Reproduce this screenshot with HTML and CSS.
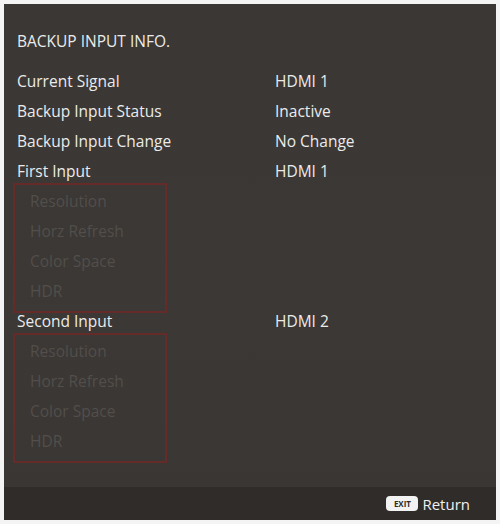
FILE: index.html
```html
<!DOCTYPE html>
<html>
<head>
<meta charset="utf-8">
<link rel="stylesheet" href="styles.css">
</head>
<body>
<div class="screen">
  <div class="content">
    <div class="title">BACKUP INPUT INFO.</div>
    <div class="row"><span class="label">Current Signal</span><span class="value">HDMI 1</span></div>
    <div class="row"><span class="label">Backup Input Status</span><span class="value">Inactive</span></div>
    <div class="row"><span class="label">Backup Input Change</span><span class="value">No Change</span></div>
    <div class="row"><span class="label">First Input</span><span class="value">HDMI 1</span></div>
    <div class="group">
      <div class="row dim"><span class="label">Resolution</span></div>
      <div class="row dim"><span class="label">Horz Refresh</span></div>
      <div class="row dim"><span class="label">Color Space</span></div>
      <div class="row dim"><span class="label">HDR</span></div>
    </div>
    <div class="row"><span class="label">Second Input</span><span class="value">HDMI 2</span></div>
    <div class="group">
      <div class="row dim"><span class="label">Resolution</span></div>
      <div class="row dim"><span class="label">Horz Refresh</span></div>
      <div class="row dim"><span class="label">Color Space</span></div>
      <div class="row dim"><span class="label">HDR</span></div>
    </div>
  </div>
  <div class="footer">
    <span class="key">EXIT</span><span class="ret">Return</span>
  </div>
</div>
</body>
</html>
```
FILE: styles.css
```css
html, body {
  margin: 0;
  padding: 0;
  background: #f4f4f4;
}
body {
  width: 500px;
  height: 524px;
  overflow: hidden;
}
.screen {
  margin: 4px 4px 0 4px;
  width: 492px;
  height: 516px;
  background: linear-gradient(#3a3734, #3b3835 60%, #393633);
  display: flex;
  flex-direction: column;
  font-family: "Open Sans", "Noto Sans", sans-serif;
  color: #ebebeb;
}
.content {
  flex: 1;
  padding: 27px 0 0 13px;
}
.title {
  font-size: 15.5px;
  line-height: 20px;
  height: 20px;
  margin-bottom: 15px;
}
.row {
  display: flex;
  height: 30px;
  line-height: 30px;
  font-size: 15.5px;
  white-space: nowrap;
}
.label {
  width: 258px;
}
.value {
  flex: 1;
}
.group {
  position: relative;
  width: 146px;
}
.group::after {
  content: "";
  position: absolute;
  left: -4px;
  right: -4px;
  top: -3px;
  bottom: -7px;
  border: 2px solid #652b29;
}
.dim {
  color: #524e4b;
  padding-left: 13px;
}
.footer {
  height: 33px;
  background: #2f2c2a;
  display: flex;
  align-items: center;
  justify-content: flex-end;
  padding-right: 26px;
  gap: 4px;
}
.key {
  background: #f2f2f2;
  color: #2f2c2a;
  font-size: 8px;
  font-weight: 700;
  line-height: 15px;
  height: 15px;
  width: 32px;
  text-align: center;
  border-radius: 4px;
}
.ret {
  font-size: 15px;
  color: #f0f0f0;
}
```
